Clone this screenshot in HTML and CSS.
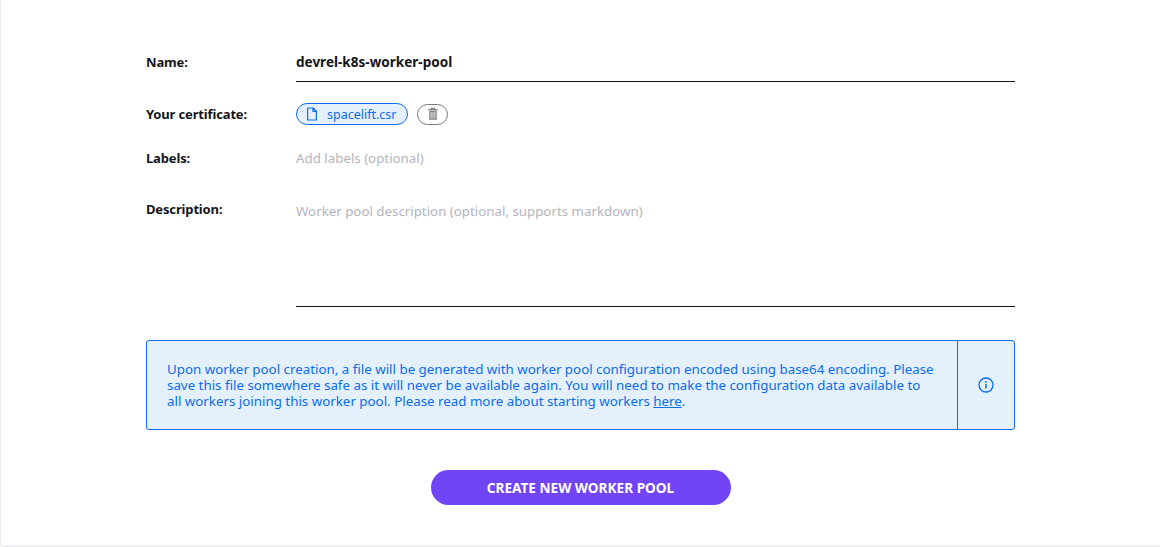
FILE: index.html
```html
<!DOCTYPE html>
<html lang="en">
<head>
<meta charset="utf-8">
<title>Create worker pool</title>
<link rel="stylesheet" href="styles.css">
</head>
<body>
<main class="card">
  <div class="row row-name">
    <div class="label">Name:</div>
    <div class="field name-value">devrel-k8s-worker-pool</div>
  </div>
  <div class="row row-cert">
    <div class="label">Your certificate:</div>
    <div class="field cert">
      <span class="file-pill">
        <svg class="file-icon" viewBox="0 0 12 14" width="12" height="14" aria-hidden="true"><path d="M1.6 1h5.6l3.2 3.2v8.8H1.6z M7 1v3.4h3.4" fill="none" stroke="currentColor" stroke-width="1.2" stroke-linejoin="round"/></svg>
        <span>spacelift.csr</span>
      </span>
      <span class="trash-pill">
        <svg viewBox="0 0 12 14" width="12" height="14" aria-hidden="true"><path d="M4.5 2.2V1.2h3v1M1 2.8h10" fill="none" stroke="#6f6f76" stroke-width="1.1"/><path d="M2.2 3.6h7.6v9.2H2.2z" fill="#8a8a90"/><path d="M4.2 5v6.4M6 5v6.4M7.8 5v6.4" stroke="#fff" stroke-width=".7"/></svg>
      </span>
    </div>
  </div>
  <div class="row row-labels">
    <div class="label">Labels:</div>
    <div class="field placeholder">Add labels (optional)</div>
  </div>
  <div class="row row-desc">
    <div class="label">Description:</div>
    <div class="field placeholder desc">Worker pool description (optional, supports markdown)</div>
  </div>
  <div class="notice">
    <p class="notice-text">Upon worker pool creation, a file will be generated with worker pool configuration encoded using base64 encoding. Please save this file somewhere safe as it will never be available again. You will need to make the configuration data available to all workers joining this worker pool. Please read more about starting workers <a href="#">here</a>.</p>
    <div class="notice-icon">
      <svg viewBox="0 0 16 16" width="16" height="16" aria-hidden="true"><circle cx="8" cy="8" r="7" fill="none" stroke="currentColor" stroke-width="1.3"/><circle cx="8" cy="4.9" r=".9" fill="currentColor"/><path d="M8 7v4.6" stroke="currentColor" stroke-width="1.5"/></svg>
    </div>
  </div>
  <div class="actions">
    <button class="create" type="button">CREATE NEW WORKER POOL</button>
  </div>
</main>
</body>
</html>
```
FILE: styles.css
```css
* { box-sizing: border-box; }
html, body { margin: 0; padding: 0; background: #fff; }
body { font-family: "Noto Sans", "Open Sans", sans-serif; font-size: 13px; color: #15151c; overflow: hidden; }
.card {
  width: 1160px;
  height: 547px;
  border-left: 1px solid #e8e8ee;
  border-bottom: 2px solid #eeeef3;
  border-radius: 0 0 0 4px;
  padding: 53px 145px 0 145px;
}
.row { display: flex; }
.label { width: 150px; flex: none; font-weight: 700; font-size: 13px; line-height: 18px; letter-spacing: -.15px; }
.field { flex: 1; min-width: 0; }
.row-name { height: 29px; }
.name-value { font-weight: 700; font-size: 13.55px; line-height: 18px; border-bottom: 1px solid #15151c; }
.row-cert { margin-top: 21px; height: 22px; align-items: center; }
.cert { display: flex; align-items: center; gap: 9px; }
.file-pill {
  display: flex; align-items: center; gap: 9px;
  height: 22px; width: 112px; padding-left: 9px;
  border: 1px solid #0b6cec; border-radius: 11px;
  background: #e4f1fd; color: #0b6cec; font-size: 12.5px;
}
.file-icon { flex: none; }
.trash-pill {
  display: flex; align-items: center; justify-content: center;
  width: 31px; height: 21px;
  border: 1px solid #77777e; border-radius: 11px;
}
.row-labels { margin-top: 24px; height: 18px; }
.placeholder { color: #b4b4c0; font-size: 13.3px; line-height: 18px; }
.row-desc { margin-top: 34px; }
.row-desc .label { line-height: 16px; }
.desc { height: 106px; border-bottom: 1px solid #15151c; padding-top: 1px; }
.notice {
  display: flex; margin-top: 33px; width: 869px; height: 90px;
  border: 1px solid #0b6cec; border-radius: 3px;
  background: #e4f1fd; color: #0b6cec;
}
.notice-text { flex: 1; margin: 0; padding: 20px 20px 0; font-size: 13.33px; line-height: 16px; }
.notice-text a { color: inherit; text-decoration: underline; }
.notice-icon {
  flex: none; width: 57px; display: flex; align-items: center; justify-content: center;
  border-left: 1px solid #0b6cec;
}
.actions { width: 869px; display: flex; justify-content: center; margin-top: 40px; }
.create {
  width: 300px; height: 35px; border: 0; border-radius: 18px;
  background: #7145f5; color: #fff;
  font-family: inherit; font-weight: 700; font-size: 13.6px;
}
```
